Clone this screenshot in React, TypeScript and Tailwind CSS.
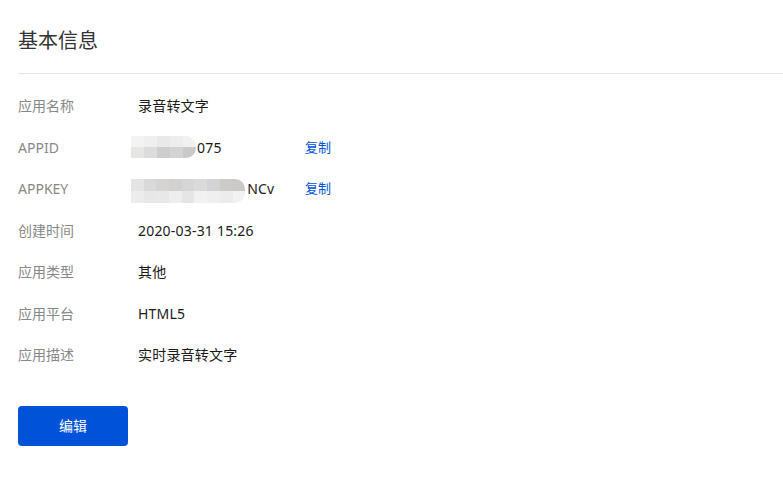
import React from "react";

const rows: { label: string; value: React.ReactNode; copy?: boolean }[] = [
  { label: "应用名称", value: "录音转文字" },
  { label: "APPID", value: "appid", copy: true },
  { label: "APPKEY", value: "appkey", copy: true },
  { label: "创建时间", value: "2020-03-31 15:26" },
  { label: "应用类型", value: "其他" },
  { label: "应用平台", value: "HTML5" },
  { label: "应用描述", value: "实时录音转文字" },
];

function Mosaic({ top, bottom, w, h }: { top: string[]; bottom: string[]; w: number; h: number }) {
  return (
    <div className="flex flex-col rounded-r-[10px] overflow-hidden">
      <div className="flex" style={{ height: h }}>
        {top.map((c, i) => (
          <div key={i} className="h-full" style={{ width: w, background: c }} />
        ))}
      </div>
      <div className="flex" style={{ height: h }}>
        {bottom.map((c, i) => (
          <div key={i} className="h-full" style={{ width: w, background: c }} />
        ))}
      </div>
    </div>
  );
}

function Value({ v }: { v: React.ReactNode }) {
  if (v === "appid") {
    return (
      <div className="flex items-center -ml-[7px]">
        <Mosaic
          w={13}
          h={11}
          top={["#f3f3f3", "#efefef", "#e9e9ea", "#ededed", "#f1f1f1"]}
          bottom={["#e8e6e4", "#dcdcdc", "#cdcdcd", "#d3d3d3", "#c9c9c9"]}
        />
        <span className="ml-[1px]">075</span>
      </div>
    );
  }
  if (v === "appkey") {
    return (
      <div className="flex items-center -ml-[7px] mt-[5px]">
        <Mosaic
          w={12.7}
          h={12}
          top={["#e4e4e4", "#d9d9da", "#d6d4d3", "#d3d1d0", "#d7d6d7", "#dadada", "#d3d3d5", "#cdcbca", "#cac9c7"]}
          bottom={["#ececec", "#e7e7e8", "#e9e8e7", "#eeeeee", "#e5e5e6", "#f1f1f1", "#efefef", "#ececec", "#f2f2f2"]}
        />
        <span className="ml-[2px] -mt-[5px]">NCv</span>
      </div>
    );
  }
  return <span>{v}</span>;
}

export default function App() {
  return (
    <div
      className="w-[783px] h-[479px] bg-white pl-[18px]"
      style={{ fontFamily: '"Noto Sans", "Noto Sans CJK SC", sans-serif' }}
    >
      <div className="pt-[27px] pb-[18px] border-b border-[#e3e3e3]">
        <h1 className="text-[20px] leading-[28px] text-[#333] font-normal">基本信息</h1>
      </div>
      <div className="mt-[11px]">
        {rows.map((r) => (
          <div key={r.label} className="flex items-center h-[41.5px] text-[14px]">
            <div className="w-[120px] text-[#888]">{r.label}</div>
            <div className="w-[167px] text-[#1a1a1a] tracking-[0.2px]">
              <Value v={r.value} />
            </div>
            {r.copy && (
              <a className="text-[13px] text-[#0052d9] cursor-pointer">复制</a>
            )}
          </div>
        ))}
      </div>
      <button className="mt-[30px] w-[110px] h-[40px] rounded-[4px] bg-[#0052d9] text-white text-[14px]">
        编辑
      </button>
    </div>
  );
}
